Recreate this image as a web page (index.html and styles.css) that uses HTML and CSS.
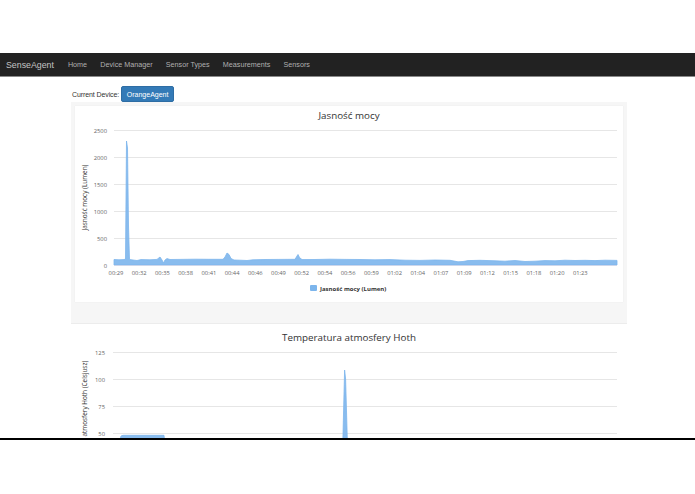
FILE: index.html
```html
<!DOCTYPE html>
<html lang="pl">
<head>
<meta charset="utf-8">
<title>SenseAgent</title>
<link rel="stylesheet" href="styles.css">
</head>
<body>
<div class="viewport">
  <div class="topgap"></div>
  <nav class="navbar">
    <span class="brand">SenseAgent</span>
    <a class="nav-link">Home</a>
    <a class="nav-link">Device Manager</a>
    <a class="nav-link">Sensor Types</a>
    <a class="nav-link">Measurements</a>
    <a class="nav-link">Sensors</a>
  </nav>
  <main class="container">
    <div class="device-row">
      <span class="device-label">Current Device:</span>
      <button class="device-btn">OrangeAgent</button>
    </div>
    <section class="panel">
      <div class="chart-box">
        <svg class="chart" width="548" height="196" viewBox="0 0 548 196">
          <text class="title" x="274" y="13" text-anchor="middle">Jasność mocy</text>
          <g class="grid">
            <line x1="39" x2="542" y1="24.5" y2="24.5"/>
            <line x1="39" x2="542" y1="51.5" y2="51.5"/>
            <line x1="39" x2="542" y1="78.5" y2="78.5"/>
            <line x1="39" x2="542" y1="105.5" y2="105.5"/>
            <line x1="39" x2="542" y1="132.5" y2="132.5"/>
          </g>
          <g class="ylab" text-anchor="end">
            <text x="32" y="26.5">2500</text>
            <text x="32" y="53.5">2000</text>
            <text x="32" y="80.5">1500</text>
            <text x="32" y="107.5">1000</text>
            <text x="32" y="134.5">500</text>
            <text x="32" y="161.5">0</text>
          </g>
          <text class="axis-title" transform="translate(12 91.5) rotate(-90)" text-anchor="middle">Jasność mocy (Lumen)</text>
          <path class="area" d="M39,159 L39,153.5 L44,153.8 L49,153.6 L50.5,153 L51.5,35 L52.5,42 L53.5,120 L54.5,153.5 L58,154 L62,154.5 L66,153.6 L75,153.8 L82,153.4 L85,151 L87,154 L88.5,157 L90,154 L92,152.6 L95,153.5 L105,153.4 L120,153.2 L135,153.3 L148,153.3 L150,151 L152,147 L154,148.5 L156,152.5 L159,154 L165,154.2 L172,154.5 L178,153.8 L190,153.5 L205,153.4 L220,153.3 L222,150 L223,148.5 L224.5,151.5 L227,153.6 L240,153.5 L255,153.2 L270,153.4 L285,153.5 L300,153.8 L315,153.6 L330,154.2 L345,154.4 L360,154 L375,154.3 L383,155.8 L388,155.5 L393,154.6 L405,154.3 L420,154.8 L430,155.2 L440,154.5 L450,155.5 L460,155.2 L470,154.6 L480,154.8 L490,154.2 L500,154.5 L510,154.3 L520,154.6 L530,154.2 L542,154.4 L542,159 Z"/>
          <line class="axis" x1="39" x2="542" y1="159.5" y2="159.5"/>
          <g class="xlab" text-anchor="middle">
            <text x="41" y="168.5">00:29</text>
            <text x="64.2" y="168.5">00:32</text>
            <text x="87.4" y="168.5">00:35</text>
            <text x="110.6" y="168.5">00:38</text>
            <text x="133.9" y="168.5">00:41</text>
            <text x="157.1" y="168.5">00:44</text>
            <text x="180.3" y="168.5">00:46</text>
            <text x="203.5" y="168.5">00:49</text>
            <text x="226.7" y="168.5">00:52</text>
            <text x="249.9" y="168.5">00:54</text>
            <text x="273.1" y="168.5">00:56</text>
            <text x="296.4" y="168.5">00:59</text>
            <text x="319.6" y="168.5">01:02</text>
            <text x="342.8" y="168.5">01:04</text>
            <text x="366" y="168.5">01:07</text>
            <text x="389.2" y="168.5">01:09</text>
            <text x="412.4" y="168.5">01:12</text>
            <text x="435.6" y="168.5">01:15</text>
            <text x="458.9" y="168.5">01:18</text>
            <text x="482.1" y="168.5">01:20</text>
            <text x="505.3" y="168.5">01:23</text>
          </g>
          <rect class="legend-sym" x="235" y="179" width="7" height="6" rx="1"/>
          <text class="legend" x="245" y="184.5">Jasność mocy (Lumen)</text>
        </svg>
      </div>
    </section>
    <section class="chart2-box">
      <svg class="chart" width="548" height="115" viewBox="0 0 548 115">
        <text class="title" x="274" y="17.5" text-anchor="middle">Temperatura atmosfery Hoth</text>
        <g class="grid">
          <line x1="38" x2="542" y1="29.5" y2="29.5"/>
          <line x1="38" x2="542" y1="56.5" y2="56.5"/>
          <line x1="38" x2="542" y1="83.5" y2="83.5"/>
          <line x1="38" x2="542" y1="110.5" y2="110.5"/>
        </g>
        <g class="ylab" text-anchor="end">
          <text x="30" y="31.5">125</text>
          <text x="30" y="58.5">100</text>
          <text x="30" y="85.5">75</text>
          <text x="30" y="112.5">50</text>
        </g>
        <text class="axis-title" transform="translate(12 96) rotate(-90)" text-anchor="middle">Temperatura atmosfery Hoth (Celsjusz)</text>
        <path class="area" d="M44,120 L46,113 L48,112.3 L89,112.3 L90,120 Z"/>
        <path class="area" d="M267.8,120 L269.6,47 L270.6,56 L272.4,120 Z"/>
      </svg>
    </section>
  </main>
</div>
<div class="cutline"></div>
</body>
</html>
```

FILE: styles.css
```css
html, body {
  margin: 0;
  padding: 0;
  background: #ffffff;
}

body {
  font-family: "Liberation Sans", Arial, sans-serif;
  color: #333333;
}

.viewport {
  height: 438px;
  overflow: hidden;
  background: #ffffff;
}

.topgap {
  height: 53px;
}

.navbar {
  height: 23px;
  background: #222222;
  box-shadow: 0 1px 0 #8a8a8a;
  display: flex;
  align-items: center;
  box-sizing: border-box;
  padding-left: 6px;
  position: relative;
}

.brand {
  font-size: 8.8px;
  color: #c4c4c4;
  margin-right: 7.4px;
}

.nav-link {
  font-size: 7.2px;
  color: #b0b0b0;
  padding: 0 6.6px;
  font-weight: 400;
}

.container {
  margin-left: 71px;
  width: 556px;
}

.device-row {
  margin-top: 10px;
  height: 16px;
  display: flex;
  align-items: center;
  padding-left: 1px;
}

.device-label {
  font-size: 7px;
  color: #333333;
  margin-right: 2px;
  letter-spacing: -0.1px;
}

.device-btn {
  height: 16px;
  width: 53px;
  padding: 0;
  border: 1px solid #2e6da4;
  border-radius: 2px;
  background: #337ab7;
  color: #ffffff;
  font-family: "Liberation Sans", Arial, sans-serif;
  font-size: 7px;
}

.panel {
  background: #f6f6f6;
  padding: 4px 4px 21px 4px;
  border-bottom: 1px solid #ececec;
}

.chart-box {
  background: #ffffff;
  height: 196px;
  box-shadow: 0 0 1px #e6e6e6;
}

.chart {
  display: block;
  font-family: "Open Sans", "DejaVu Sans", sans-serif;
}

.chart2-box {
  margin-left: 4px;
  margin-top: -1px;
}

.title {
  font-size: 9.8px;
  fill: #333333;
}

.grid line {
  stroke: #e6e6e6;
  stroke-width: 1;
}

.axis {
  stroke: #ccd6eb;
  stroke-width: 1;
}

.ylab text {
  font-size: 5.8px;
  fill: #666666;
}

.xlab text {
  font-size: 5.8px;
  fill: #666666;
}

.axis-title {
  font-size: 6.4px;
  fill: #333333;
}

.area {
  fill: #7cb5ec;
  fill-opacity: 0.9;
  stroke: #7cb5ec;
  stroke-width: 0.8;
}

.legend-sym {
  fill: #7cb5ec;
}

.legend {
  font-size: 6px;
  font-weight: 700;
  fill: #333333;
}

.cutline {
  height: 2px;
  background: #000000;
}
```
